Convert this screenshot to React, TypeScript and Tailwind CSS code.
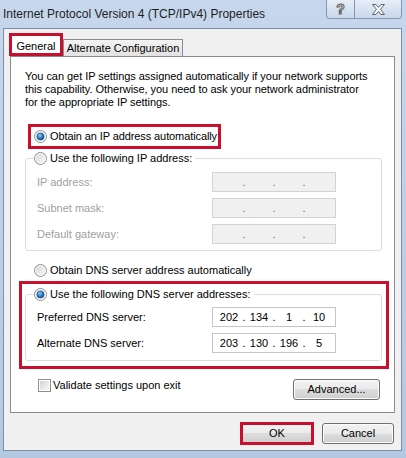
const font = "font-['Liberation_Sans',Arial,sans-serif]"
const red = 'border-[#c8102e]'

function Radio({ checked }: { checked?: boolean }) {
  return (
    <svg width="13" height="13" viewBox="0 0 13 13" className="shrink-0">
      <defs>
        <linearGradient id="rbg" x1="0" y1="0" x2="1" y2="1">
          <stop offset="0" stopColor="#d6d6d6" />
          <stop offset="1" stopColor="#fbfbfb" />
        </linearGradient>
        <radialGradient id="rdot" cx="0.4" cy="0.35" r="0.7">
          <stop offset="0" stopColor="#8fd0fa" />
          <stop offset="0.55" stopColor="#2a7fc8" />
          <stop offset="1" stopColor="#0c3f73" />
        </radialGradient>
      </defs>
      <circle cx="6.5" cy="6.5" r="6" fill="url(#rbg)" stroke="#8c8e90" strokeWidth="1" />
      <circle cx="6.5" cy="6.5" r="5" fill="none" stroke="#f4f4f4" strokeWidth="1" />
      {checked && <circle cx="6.5" cy="6.5" r="3.6" fill="url(#rdot)" stroke="#1c4f82" strokeWidth="0.6" />}
    </svg>
  )
}

function Checkbox() {
  return (
    <div className="w-[13px] h-[13px] border border-[#8e8f8f] bg-white p-px shrink-0">
      <div className="w-full h-full bg-gradient-to-br from-[#d4d4d4] to-[#f8f8f8]" />
    </div>
  )
}

function IpBox({ parts, disabled }: { parts?: string[]; disabled?: boolean }) {
  const vals = parts || ['', '', '', '']
  return (
    <div
      className={`w-[124px] h-[20px] shrink-0 border flex items-center pl-[3px] ${
        disabled ? 'border-[#cfd2d6] bg-[#f0f0f0] text-[#6a6a6a]' : 'border-[#c2c6cc] bg-white text-black'
      }`}
    >
      {vals.map((v, i) => (
        <div key={i} className="flex items-center">
          <span className="w-[26px] text-center">{v}</span>
          {i < 3 && <span className="w-[4px] text-center">.</span>}
        </div>
      ))}
    </div>
  )
}

function Row({ label, parts, disabled }: { label: string; parts?: string[]; disabled?: boolean }) {
  return (
    <div className="h-[20px] flex items-center">
      <span className={`w-[186px] shrink-0 pl-[11px] ${disabled ? 'text-[#a0a0a0]' : 'text-black'}`}>{label}</span>
      <IpBox parts={parts} disabled={disabled} />
    </div>
  )
}

function WinButton({ children, className = '' }: { children: React.ReactNode; className?: string }) {
  return (
    <div
      className={`rounded-[3px] border border-[#707070] shadow-[inset_0_0_0_1px_#fcfcfc] bg-[linear-gradient(#f2f2f2,#ebebeb_50%,#dddddd_50%,#cfcfcf)] flex items-center justify-center ${className}`}
    >
      {children}
    </div>
  )
}

export default function App() {
  return (
    <div className={`w-[406px] h-[458px] overflow-hidden bg-gradient-to-b from-[#c6d7ed] to-[#b4c8e2] text-[11px] leading-[13px] text-black flex flex-col whitespace-nowrap ${font}`}>
      {/* Title bar */}
      <div className="h-[28px] shrink-0 flex items-start">
        <div className="pl-[3px] pt-[7px] text-[12px] leading-[15px] text-[#1e1e1e]">
          Internet Protocol Version 4 (TCP/IPv4) Properties
        </div>
        <div className="ml-auto mr-[4px] flex">
          <div className="w-[29px] h-[19px] border border-t-0 border-[#8797ad] rounded-bl-[4px] bg-gradient-to-b from-[#e6eef8] to-[#c9d8ea] flex items-center justify-center">
            <span className="text-[14px] leading-[14px] font-bold text-[#f6f6f6] [-webkit-text-stroke:1px_#5b5b5b]">?</span>
          </div>
          <div className="w-[47px] h-[19px] border border-t-0 border-l-0 border-[#8797ad] rounded-br-[4px] bg-gradient-to-b from-[#e6eef8] to-[#c9d8ea] flex items-center justify-center">
            <svg width="15" height="11" viewBox="0 0 15 11">
              <path
                d="M1.5 0.5 H5 L7.5 3.3 L10 0.5 H13.5 L9.5 5.3 L13.5 10.5 H10 L7.5 7.3 L5 10.5 H1.5 L5.5 5.3 Z"
                fill="#f7f7f7"
                stroke="#5d6470"
                strokeWidth="1"
                strokeLinejoin="round"
              />
            </svg>
          </div>
        </div>
      </div>

      {/* Client area */}
      <div className="ml-[3px] w-[399px] h-[423px] border border-[#7d8ea6] bg-[#f0f0f0] flex flex-col">
        {/* Tabs */}
        <div className="mt-[4px] ml-[5px] h-[23px] flex items-end">
          <div className={`w-[54px] h-[23px] border-[3px] ${red} bg-white flex justify-center pt-[4px]`}>General</div>
          <div className="w-[120px] h-[17px] border border-b-0 border-[#898c95] bg-gradient-to-b from-[#f4f4f4] to-[#e2e2e2] flex items-center justify-center">
            Alternate Configuration
          </div>
        </div>

        {/* Tab panel */}
        <div className="ml-[6px] w-[385px] h-[357px] border border-[#898c95] bg-white flex flex-col">
          <p className="mt-[13px] ml-[14px] tracking-[-0.05px]">
            You can get IP settings assigned automatically if your network supports
            <br />
            this capability. Otherwise, you need to ask your network administrator
            <br />
            for the appropriate IP settings.
          </p>

          <div className={`mt-[15px] ml-[17px] w-[193px] h-[25px] border-[3px] ${red} flex items-center pl-[3px] gap-[3px]`}>
            <Radio checked />
            <span className="tracking-[-0.1px]">Obtain an IP address automatically</span>
          </div>

          {/* Static IP group */}
          <div className="relative mt-[9px] ml-[14px] w-[357px] h-[93px] border border-[#d5dfe5] rounded-[3px] pt-[13px] flex flex-col gap-[6px]">
            <div className="absolute left-[8px] top-[-7px] h-[13px] flex items-center gap-[3px] bg-white pr-[3px]">
              <Radio />
              <span>Use the following IP address:</span>
            </div>
            <Row label="IP address:" disabled />
            <Row label="Subnet mask:" disabled />
            <Row label="Default gateway:" disabled />
          </div>

          <div className="mt-[13px] ml-[23px] h-[13px] flex items-center gap-[3px]">
            <Radio />
            <span>Obtain DNS server address automatically</span>
          </div>

          <div className={`mt-[4px] ml-[8px] w-[370px] h-[88px] border-[3px] ${red}`}>
            <div className="relative mt-[10px] ml-[3px] w-[357px] h-[67px] border border-[#d5dfe5] rounded-[3px] pt-[12px] flex flex-col gap-[6px]">
              <div className="absolute left-[8px] top-[-7px] h-[13px] flex items-center gap-[3px] bg-white pr-[3px]">
                <Radio checked />
                <span>Use the following DNS server addresses:</span>
              </div>
              <Row label="Preferred DNS server:" parts={['202', '134', '1', '10']} />
              <Row label="Alternate DNS server:" parts={['203', '130', '196', '5']} />
            </div>
          </div>

          <div className="mt-[10px] flex items-start">
            <div className="ml-[27px] h-[13px] flex items-center gap-[2px]">
              <Checkbox />
              <span>Validate settings upon exit</span>
            </div>
            <WinButton className="ml-auto mr-[14px] w-[87px] h-[21px]">Advanced...</WinButton>
          </div>
        </div>

        {/* Dialog buttons */}
        <div className="mt-[9px] mr-[7px] flex items-center justify-end gap-[8px]">
          <div className={`w-[74px] h-[23px] border-[3px] ${red} bg-[linear-gradient(#f2f2f2,#ebebeb_50%,#dddddd_50%,#cfcfcf)] flex items-center justify-center`}>
            OK
          </div>
          <WinButton className="w-[72px] h-[21px]">Cancel</WinButton>
        </div>
      </div>
    </div>
  )
}
